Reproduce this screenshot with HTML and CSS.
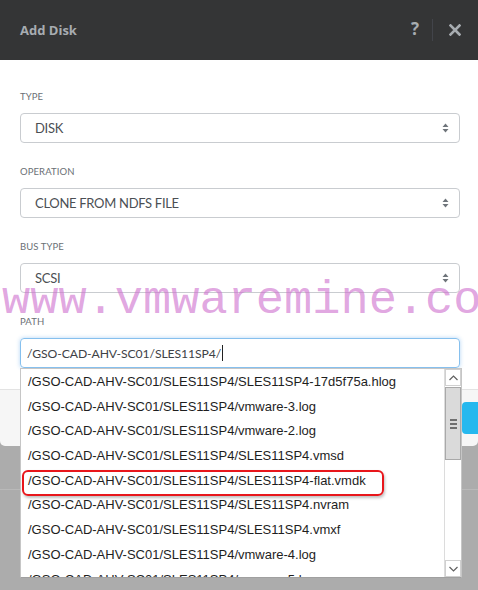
FILE: index.html
```html
<!DOCTYPE html>
<html>
<head>
<meta charset="utf-8">
<link rel="stylesheet" href="styles.css">
</head>
<body>
<div class="stage">
  <div class="modal">
    <div class="header">
      <div class="title">Add Disk</div>
      <div class="actions">
        <span class="help">?</span>
        <span class="divider"></span>
        <svg class="close" width="12" height="12" viewBox="0 0 12 12"><path d="M1.5 1.5 L10.5 10.5 M10.5 1.5 L1.5 10.5" stroke="#a7acb1" stroke-width="2.6" stroke-linecap="square"/></svg>
      </div>
    </div>
    <div class="body">
      <div class="field">
        <label class="label">TYPE</label>
        <div class="select"><span>DISK</span><svg class="arrows" width="7" height="10" viewBox="0 0 7 10"><path d="M3.5 0.5 L6.5 4 L0.5 4 Z M3.5 9.5 L6.5 6 L0.5 6 Z" fill="#6f757b"/></svg></div>
      </div>
      <div class="field">
        <label class="label">OPERATION</label>
        <div class="select"><span>CLONE FROM NDFS FILE</span><svg class="arrows" width="7" height="10" viewBox="0 0 7 10"><path d="M3.5 0.5 L6.5 4 L0.5 4 Z M3.5 9.5 L6.5 6 L0.5 6 Z" fill="#6f757b"/></svg></div>
      </div>
      <div class="field">
        <label class="label">BUS TYPE</label>
        <div class="select"><span>SCSI</span><svg class="arrows" width="7" height="10" viewBox="0 0 7 10"><path d="M3.5 0.5 L6.5 4 L0.5 4 Z M3.5 9.5 L6.5 6 L0.5 6 Z" fill="#6f757b"/></svg></div>
      </div>
      <div class="field">
        <label class="label">PATH</label>
        <div class="input"><span>/GSO-CAD-AHV-SC01/SLES11SP4/</span><span class="caret"></span></div>
      </div>
    </div>
    <div class="footer">
      <div class="btn"></div>
    </div>
  </div>
  <div class="backdrop-line"></div>

  <div class="watermark">www.vmwaremine.co</div>

  <div class="dropdown">
    <ul class="options">
      <li>/GSO-CAD-AHV-SC01/SLES11SP4/SLES11SP4-17d5f75a.hlog</li>
      <li>/GSO-CAD-AHV-SC01/SLES11SP4/vmware-3.log</li>
      <li>/GSO-CAD-AHV-SC01/SLES11SP4/vmware-2.log</li>
      <li>/GSO-CAD-AHV-SC01/SLES11SP4/SLES11SP4.vmsd</li>
      <li>/GSO-CAD-AHV-SC01/SLES11SP4/SLES11SP4-flat.vmdk</li>
      <li>/GSO-CAD-AHV-SC01/SLES11SP4/SLES11SP4.nvram</li>
      <li>/GSO-CAD-AHV-SC01/SLES11SP4/SLES11SP4.vmxf</li>
      <li>/GSO-CAD-AHV-SC01/SLES11SP4/vmware-4.log</li>
      <li>/GSO-CAD-AHV-SC01/SLES11SP4/vmware-5.log</li>
    </ul>
    <div class="scrollbar">
      <div class="sb-btn"><svg width="9" height="6" viewBox="0 0 9 6"><path d="M0.5 5 L4.5 1 L8.5 5" fill="none" stroke="#606060" stroke-width="1.2"/></svg></div>
      <div class="sb-thumb"><span></span><span></span><span></span></div>
      <div class="sb-track"></div>
      <div class="sb-btn"><svg width="9" height="6" viewBox="0 0 9 6"><path d="M0.5 1 L4.5 5 L8.5 1" fill="none" stroke="#606060" stroke-width="1.2"/></svg></div>
    </div>
    <div class="highlight"></div>
  </div>
</div>
</body>
</html>
```

FILE: styles.css
```css
html, body {
  margin: 0;
  padding: 0;
}
body {
  width: 478px;
  height: 590px;
  overflow: hidden;
  background: #acacac;
  font-family: "Lato", "Open Sans", sans-serif;
}
.stage {
  position: relative;
  width: 478px;
  height: 590px;
}
.modal {
  width: 478px;
  display: flex;
  flex-direction: column;
  border-radius: 0 0 5px 5px;
  overflow: hidden;
}
.header {
  height: 60px;
  background: #343536;
  display: flex;
  align-items: center;
  justify-content: space-between;
  padding: 0 17px 0 20px;
  box-sizing: border-box;
}
.title {
  color: #a7acb1;
  font-family: "Open Sans", sans-serif;
  font-weight: 700;
  font-size: 13px;
  margin-top: -1px;
}
.actions {
  display: flex;
  align-items: center;
}
.help {
  color: #a7acb1;
  font-family: "Open Sans", sans-serif;
  font-weight: 700;
  font-size: 17px;
  margin-top: -4px;
}
.divider {
  width: 1px;
  height: 22px;
  background: #42444a;
  margin: 0 16px 0 13px;
}
.close {
  display: block;
}
.body {
  background: #fff;
  padding: 31px 18px 21px 20px;
  display: flex;
  flex-direction: column;
  gap: 23px;
}
.field {
  display: flex;
  flex-direction: column;
}
.label {
  font-size: 9.5px;
  line-height: 12px;
  color: #6b7075;
  margin-bottom: 10px;
  letter-spacing: 0.1px;
}
.select, .input {
  height: 30px;
  box-sizing: border-box;
  border: 1px solid #c9ccd0;
  border-radius: 4px;
  display: flex;
  align-items: center;
  justify-content: space-between;
  padding: 0 10px 0 14px;
  font-size: 13px;
  letter-spacing: -0.3px;
  color: #4b4f54;
}
.arrows {
  display: block;
}
.input {
  justify-content: flex-start;
  padding-left: 6px;
  font-size: 12.2px;
  letter-spacing: -0.1px;
  border-color: #86c0ee;
  box-shadow: 0 0 4px rgba(90, 165, 235, 0.45);
  color: #3e4246;
}
.caret {
  width: 1px;
  height: 16px;
  background: #222;
  margin-left: 1px;
}
.footer {
  height: 56px;
  background: #f6f6f6;
  border-top: 1px solid #e3e3e3;
  position: relative;
}
.btn {
  position: absolute;
  left: 462px;
  top: 12px;
  width: 30px;
  height: 32px;
  border-radius: 4px;
  background: #26b8ee;
}
.backdrop-line {
  position: absolute;
  left: 0;
  top: 489px;
  width: 478px;
  height: 1px;
  background: #b9b9b9;
}
.watermark {
  position: absolute;
  left: 2px;
  top: 273px;
  font-family: "Liberation Mono", monospace;
  font-size: 47px;
  line-height: 56px;
  color: rgba(205, 110, 205, 0.62);
  white-space: nowrap;
  pointer-events: none;
}
.dropdown {
  position: absolute;
  left: 20px;
  top: 368px;
  width: 442px;
  height: 210px;
  box-sizing: border-box;
  border: 1px solid #c6c6c6;
  border-bottom-color: #a0a0a0;
  background: #fff;
  display: flex;
}
.options {
  list-style: none;
  margin: 0;
  padding: 1px 0 0;
  flex: 1;
  overflow: hidden;
  font-family: "Liberation Sans", Arial, sans-serif;
  font-size: 13px;
  color: #1e1e1e;
}
.options li {
  height: 24.7px;
  line-height: 24.7px;
  padding-left: 7px;
  white-space: nowrap;
}
.scrollbar {
  width: 17px;
  display: flex;
  flex-direction: column;
  border-left: 1px solid #dcdcdc;
  box-sizing: border-box;
}
.sb-btn {
  height: 17px;
  display: flex;
  align-items: center;
  justify-content: center;
  border: 1px solid #d0d0d0;
  box-sizing: border-box;
  background: #fff;
}
.sb-thumb {
  height: 73px;
  margin-top: 1px;
  background: #dadada;
  border: 1px solid #a9a9a9;
  box-sizing: border-box;
  display: flex;
  flex-direction: column;
  align-items: center;
  justify-content: center;
  gap: 2px;
}
.sb-thumb span {
  width: 7px;
  height: 1px;
  background: #707070;
  border-top: 1px solid #707070;
}
.sb-track {
  flex: 1;
  background: #fff;
}
.highlight {
  position: absolute;
  left: 1px;
  top: 101px;
  width: 362px;
  height: 26px;
  box-sizing: border-box;
  border: 2px solid #e8161b;
  border-radius: 6px;
  box-shadow: 1px 2px 3px rgba(0, 0, 0, 0.25);
}
```
